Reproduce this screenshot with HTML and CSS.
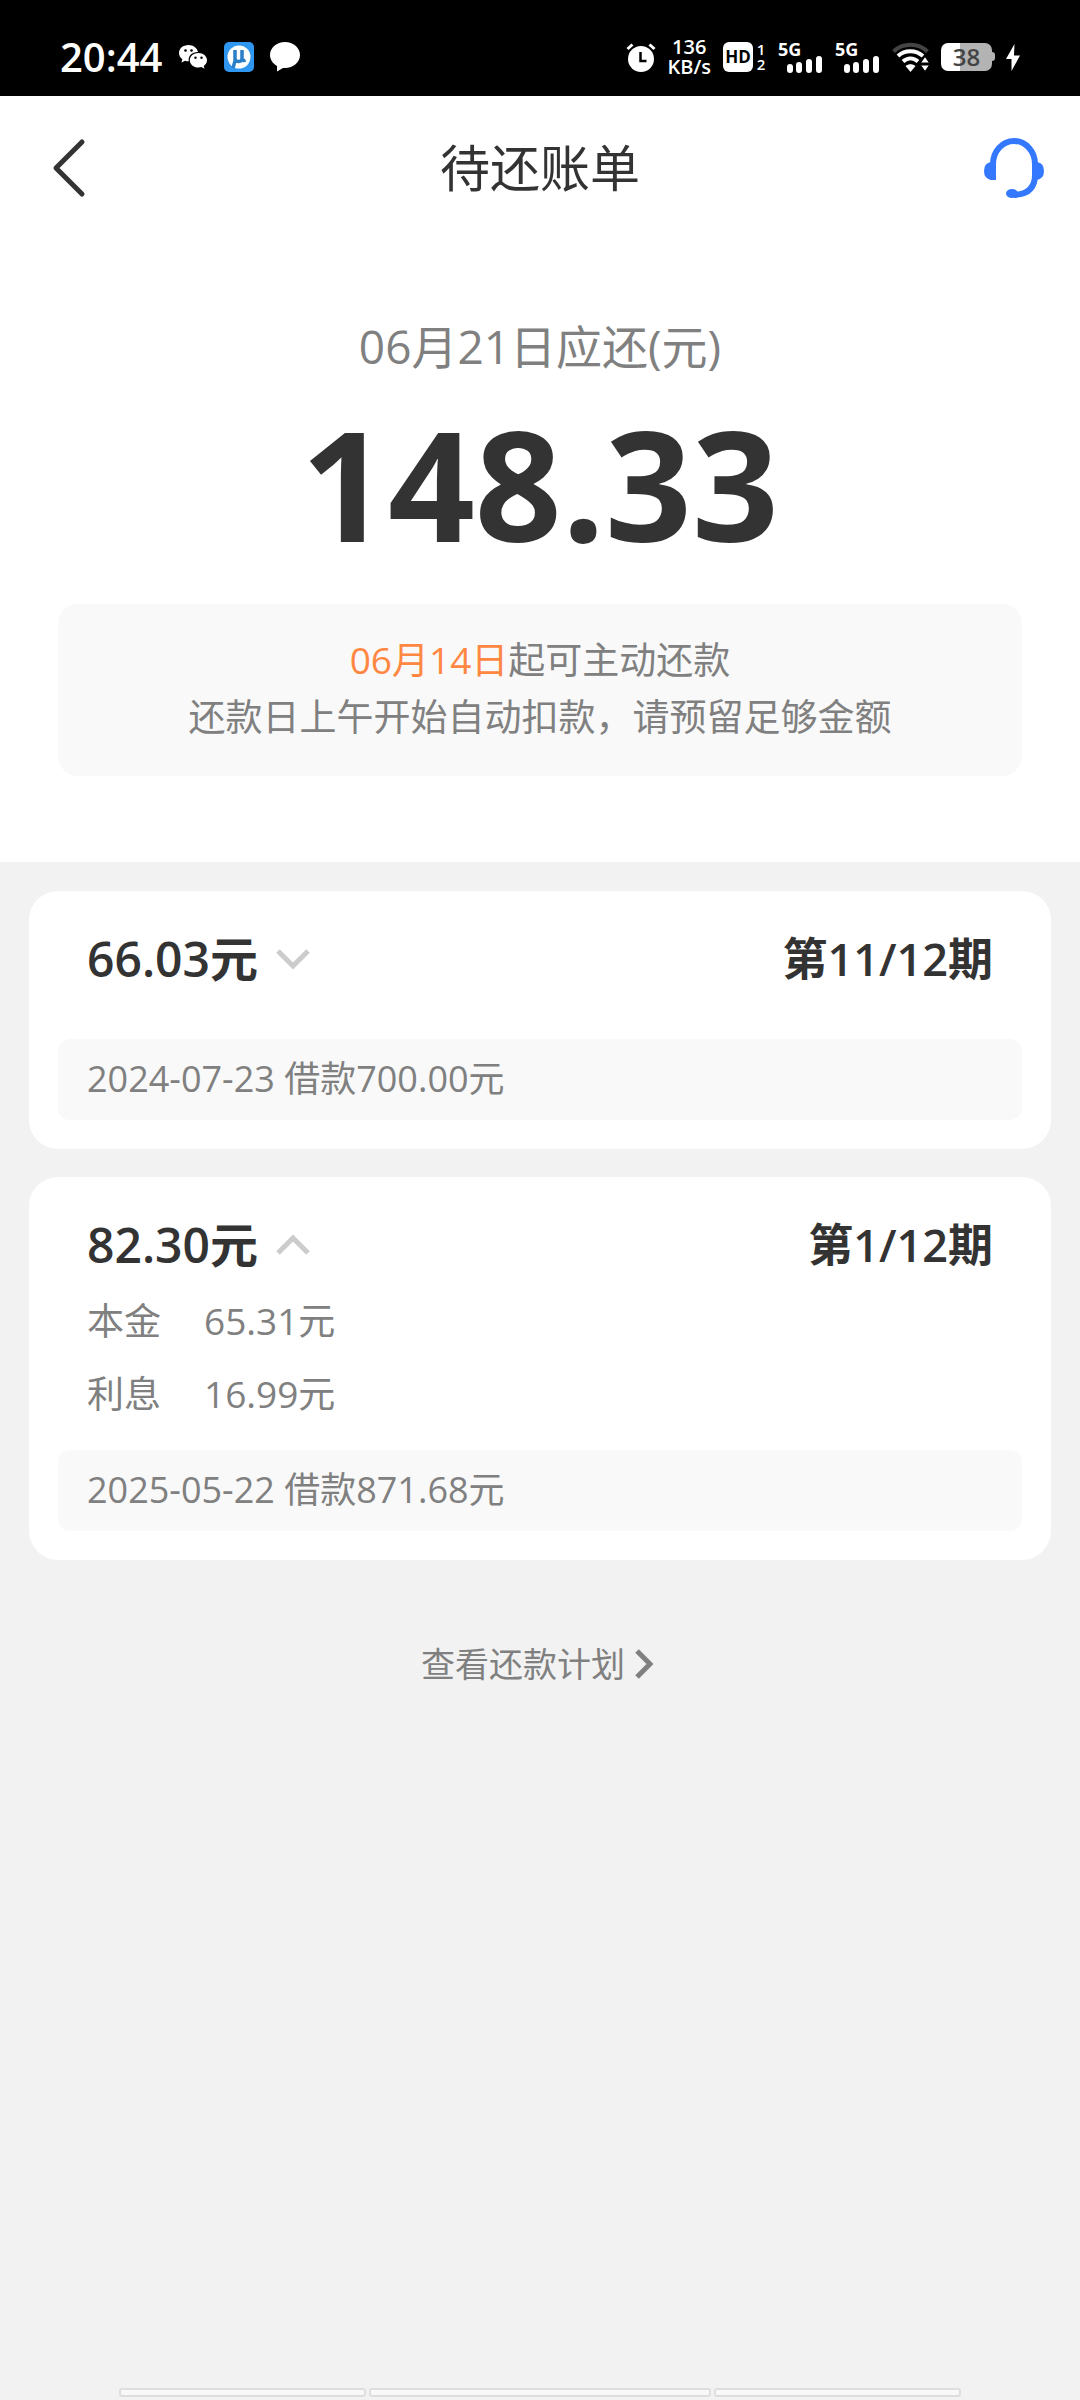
FILE: index.html
```html
<!DOCTYPE html>
<html lang="zh-CN">
<head>
    <meta charset="UTF-8">
    <meta name="viewport" content="width=device-width, initial-scale=1.0">
    <title>待还账单</title>
    <link rel="stylesheet" href="styles.css">
</head>
<body>
    <div class="status-bar">
        <div class="status-left">
            <span class="clock">20:44</span>
            <svg width="30" height="30" viewBox="0 0 30 30">
                <path fill="#fff" d="M10.500 3C4.900 3 1 6.600 1 11c0 2.600 1.400 4.800 3.300 6.200L3.500 20.500l3.600-1.700c1.200.4 2.200.5 3.600.5C10 13.500 14 9.800 20 9.900 19 5.800 15.200 3 10.500 3z"/>
                <path fill="#fff" d="M20.500 11c-5 0-8.700 3.200-8.700 7.300s3.700 7.300 8.700 7.300c1 0 2-.2 2.900-.5l3.100 1.700-.8-2.800c2-1.400 3.300-3.400 3.300-5.700 0-4.100-3.800-7.300-8.500-7.300z"/>
                <circle cx="7.500" cy="8.500" r="1.300"/>
                <circle cx="13.500" cy="8.500" r="1.300"/>
                <circle cx="17.500" cy="15.800" r="1.200"/>
                <circle cx="23.500" cy="15.800" r="1.200"/>
            </svg>
            <svg width="30" height="30" viewBox="0 0 30 30">
                <rect width="30" height="30" rx="5" fill="#3097f0"/>
                <circle cx="15" cy="15" r="11.500" fill="#fff"/>
                <path d="M11 8v8.500c0 4 7 4 7 0V8v8.500c0 2 1.500 2.500 3.500 1.500M11 14v5l-2 7" fill="none" stroke="#2b7fc9" stroke-width="3.500"/>
            </svg>
            <svg width="30" height="30" viewBox="0 0 30 30">
                <path fill="#fff" d="M15 0C6.700 0 0 5.800 0 13c0 4.600 2.800 8.600 7 10.900V29.500l6-3.600c.7.100 1.300.1 2 .1 8.300 0 15-5.800 15-13S23.300 0 15 0z"/>
            </svg>
        </div>
        <div class="status-right">
            <svg width="30" height="30" viewBox="0 0 30 30">
                <circle cx="15" cy="17" r="13" fill="#fff"/>
                <path d="M1.500 7l5-4.500M28.500 7l-5-4.500" stroke="#fff" stroke-width="3"/>
                <path d="M14.500 10v9h6" fill="none" stroke="#000" stroke-width="2.500"/>
            </svg>
            <div class="net-speed"><span>136</span><span>KB/s</span></div>
            <div class="volte">
                <span class="hd">HD</span>
                <span class="sims"><span>1</span><span>2</span></span>
            </div>
            <div class="signal">
                <span>5G</span>
                <svg width="36" height="17" viewBox="0 0 36 17">
                    <path d="M3 11v3M12 9v5M22 6v8M32 3v11" stroke="#fff" stroke-width="6" stroke-linecap="round"/>
                </svg>
            </div>
            <div class="signal">
                <span>5G</span>
                <svg width="36" height="17" viewBox="0 0 36 17">
                    <path d="M3 11v3M12 9v5M22 6v8M32 3v11" stroke="#fff" stroke-width="6" stroke-linecap="round"/>
                </svg>
            </div>
            <svg width="37" height="30" viewBox="0 0 37 30">
                <path d="M1.500 9.500C11 .5 26 .5 35.500 9.500" fill="none" stroke="#444" stroke-width="4"/>
                <path d="M6 14c7-6.300 17.500-6.300 25 0M11 19.500c4.500-4 10.500-4 15 0" fill="none" stroke="#fff" stroke-width="4"/>
                <path d="M18.500 30l-5-6c3-2.500 7-2.500 10 0z" fill="#fff"/>
                <path d="M33 14.500l4.500 6.500h-9zM33 29.500l4.500-6.500h-9z" fill="#fff" stroke="#000"/>
            </svg>
            <div class="battery">38</div>
            <svg width="14" height="30" viewBox="0 0 14 30">
                <path fill="#fff" d="M8.500 2L0 17h5.500v12L14 13.500H8z"/>
            </svg>
        </div>
    </div>

    <header class="nav">
        <button class="nav-button" aria-label="返回">
            <svg width="36" height="60" viewBox="0 0 36 60">
                <path d="M32 4L6 30l26 26" fill="none" stroke="#333" stroke-width="5" stroke-linecap="round" stroke-linejoin="round"/>
            </svg>
        </button>
        <h1>待还账单</h1>
        <button class="nav-button service" aria-label="客服">
            <svg width="60" height="60" viewBox="0 0 60 60">
                <path d="M9 42V26a21 23 0 0 1 42 0v11q0 19-21 20" fill="none" stroke="#3478ff" stroke-width="6"/>
                <path d="M12 24v18H7.500Q0 41 0 33q0-8 7-9zM48 24h5q7 1 7 9 0 8-7.500 9H48z" fill="#3478ff"/>
                <ellipse cx="28" cy="55.500" rx="6" ry="4.500" fill="#3478ff"/>
            </svg>
        </button>
    </header>

    <section class="summary">
        <p class="due">06月21日应还(元)</p>
        <p class="total">148.33</p>
        <div class="notice">
            <p><span class="highlight">06月14日</span>起可主动还款</p>
            <p>还款日上午开始自动扣款，请预留足够金额</p>
        </div>
    </section>

    <main class="bills">
        <article class="card">
            <div class="card-head">
                <button class="amount" aria-expanded="false">66.03元
                    <svg width="34" height="22" viewBox="0 0 34 22">
                        <path d="M2 3l15 15L32 3" fill="none" stroke="#ccc" stroke-width="5"/>
                    </svg>
                </button>
                <span>第11/12期</span>
            </div>
            <p class="loan">2024-07-23 借款700.00元</p>
        </article>

        <article class="card open">
            <div class="card-head">
                <button class="amount" aria-expanded="true">82.30元
                    <svg width="34" height="22" viewBox="0 0 34 22">
                        <path d="M2 19L17 4l15 15" fill="none" stroke="#ccc" stroke-width="5"/>
                    </svg>
                </button>
                <span>第1/12期</span>
            </div>
            <dl class="detail">
                <dt>本金</dt><dd>65.31元</dd>
                <dt>利息</dt><dd>16.99元</dd>
            </dl>
            <p class="loan">2025-05-22 借款871.68元</p>
        </article>

        <a class="plan" href="#">查看还款计划
            <svg width="18" height="30" viewBox="0 0 18 30">
                <path d="M2 2l13 13L2 28" fill="none" stroke="#808080" stroke-width="5"/>
            </svg>
        </a>
    </main>

    <div class="system-nav"><span></span><span></span><span></span></div>
</body>
</html>
```

FILE: styles.css
```css
* {
    box-sizing: border-box;
}
body {
    display: flex;
    flex-direction: column;
    min-height: 100vh;
    margin: 0;
    background-color: #f2f2f2;
    color: #333;
    font-family: "Open Sans", "Noto Sans CJK SC", sans-serif;
}
h1, p, dl, dd {
    margin: 0;
}
button {
    padding: 0;
    border: 0;
    background: none;
    color: inherit;
    font: inherit;
    cursor: pointer;
}
svg {
    display: block;
    flex: none;
}

/* status bar */
.status-bar {
    display: flex;
    justify-content: space-between;
    align-items: center;
    height: 96px;
    padding: 18px 60px 0;
    background-color: #000;
    color: #fff;
    font-weight: 600;
}
.status-left,
.status-right {
    display: flex;
    align-items: center;
}
.status-left {
    gap: 16px;
}
.status-right {
    gap: 12px;
}
.clock {
    font-size: 40px;
    line-height: 40px;
}
.net-speed {
    display: flex;
    flex-direction: column;
    font-size: 20px;
    line-height: 20px;
    text-align: center;
}
.volte {
    display: flex;
    gap: 3px;
}
.hd {
    width: 30px;
    height: 30px;
    border-radius: 6px;
    background-color: #fff;
    color: #000;
    font-size: 17px;
    font-weight: 700;
    line-height: 30px;
    text-align: center;
}
.sims {
    display: flex;
    flex-direction: column;
    width: 10px;
    font-size: 15px;
    line-height: 15px;
    text-align: center;
}
.signal {
    width: 45px;
    font-size: 18px;
    font-weight: 700;
    line-height: 14px;
}
.signal span {
    display: block;
}
.signal svg {
    margin-left: 9px;
}
.battery {
    position: relative;
    width: 51px;
    height: 28px;
    margin-right: 2px;
    border-radius: 7px;
    background: linear-gradient(90deg, #fff 38%, #b3b3b3 38%);
    color: #444;
    font-size: 24px;
    line-height: 28px;
    text-align: center;
}
.battery::after {
    content: "";
    position: absolute;
    top: 9px;
    right: -3px;
    width: 3px;
    height: 9px;
    border-radius: 0 3px 3px 0;
    background-color: #b3b3b3;
}

/* title bar */
.nav {
    display: grid;
    grid-template-columns: 1fr auto 1fr;
    align-items: center;
    height: 144px;
    background-color: #fff;
}
.nav-button {
    justify-self: start;
    margin: 0 36px 0 50px;
}
.service {
    justify-self: end;
}
.nav h1 {
    font-size: 50px;
    font-weight: 400;
    line-height: 60px;
}

/* amount due */
.summary {
    padding: 76px 58px 86px;
    background-color: #fff;
    color: #808080;
    text-align: center;
}
.due {
    font-size: 46px;
    line-height: 60px;
}
.total {
    margin: 28px 0 40px;
    color: #333;
    font-size: 152px;
    font-weight: 700;
    line-height: 160px;
}
.notice {
    padding: 27px 20px 31px;
    border-radius: 20px;
    background-color: #f9f9f9;
    font-size: 37px;
    line-height: 57px;
}
.highlight {
    color: #ff8742;
}

/* bills */
.bills {
    flex: 1;
    padding: 29px;
}
.card {
    margin-bottom: 28px;
    padding: 38px 29px 29px;
    border-radius: 29px;
    background-color: #fff;
}
.card-head {
    display: flex;
    justify-content: space-between;
    padding: 0 29px;
    margin-bottom: 50px;
    font-size: 45px;
    font-weight: 600;
    line-height: 60px;
}
.open .card-head {
    margin-bottom: 9px;
}
.amount {
    display: flex;
    align-items: center;
    gap: 18px;
    font-size: 48px;
}
.detail {
    display: grid;
    grid-template-columns: auto 1fr;
    column-gap: 43px;
    margin-bottom: 20px;
    padding: 0 29px;
    color: #808080;
    font-size: 37px;
    line-height: 73px;
}
.loan {
    padding: 9px 29px 11px;
    border-radius: 12px;
    background-color: #f9f9f9;
    color: #808080;
    font-size: 36px;
    line-height: 61px;
}
.plan {
    display: flex;
    justify-content: center;
    align-items: center;
    gap: 10px;
    margin-top: 74px;
    padding-right: 6px;
    color: #808080;
    font-size: 34px;
    line-height: 60px;
    text-decoration: none;
}

/* system navigation */
.system-nav {
    display: grid;
    grid-template-columns: 247fr 342fr 247fr;
    gap: 3px;
    padding: 0 119px 3px;
}
.system-nav span {
    height: 9px;
    border: 2px solid #dedede;
    border-radius: 3px;
    background-color: #f8f8f8;
}
```
